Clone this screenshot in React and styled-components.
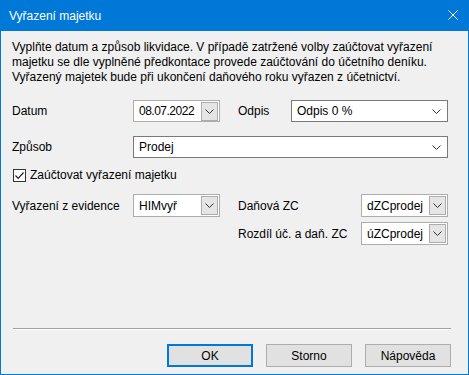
import React from 'react';
import styled, { createGlobalStyle } from 'styled-components';

const GlobalStyle = createGlobalStyle`
  html, body {
    margin: 0;
    padding: 0;
    background: #ffffff;
  }
  body {
    font-family: "Liberation Sans", Arial, sans-serif;
    font-size: 12px;
    color: #000;
  }
`;

const Window = styled.div`
  width: 469px;
  height: 375px;
  box-sizing: border-box;
  border: 1px solid #0078d7;
  border-top: none;
  display: flex;
  flex-direction: column;
  background: #f0f0f0;
`;

const TitleBar = styled.div`
  height: 31px;
  margin: 0 -1px;
  background: #0078d7;
  color: #fff;
  display: flex;
  align-items: center;
  justify-content: space-between;
  padding: 0 11px 0 9px;
  font-size: 12px;
`;

const CloseButton = styled.div`
  width: 10px;
  height: 10px;
  display: flex;
  margin-top: -1px;
`;

const Body = styled.div`
  flex: 1;
  display: flex;
  flex-direction: column;
  padding: 9px 17px 7px 11px;
`;

const Intro = styled.p`
  margin: 0;
  line-height: 15px;
`;

const Row = styled.div`
  display: flex;
  align-items: center;
  margin-top: ${p => p.$top || 0}px;
`;

const Label = styled.div`
  width: ${p => p.$w}px;
  flex: none;
  margin-left: ${p => p.$left || 0}px;
`;

const Field = styled.div`
  width: ${p => p.$w}px;
  height: ${p => p.$h || 22}px;
  flex: none;
  box-sizing: border-box;
  background: #fff;
  border: 1px solid ${p => (p.$soft ? '#adadad' : '#7a7a7a')};
  display: flex;
  align-items: center;
  padding: 0 1px 0 5px;
`;

const FieldText = styled.span`
  flex: 1;
  letter-spacing: ${p => p.$tight ? '-0.5px' : 'normal'};
`;

const DropButton = styled.div`
  width: 17px;
  height: ${p => p.$h || 19}px;
  box-sizing: border-box;
  border: 1px solid #adadad;
  background: #e5e5e5;
  display: flex;
  align-items: center;
  justify-content: center;
`;

const FlatArrow = styled.div`
  width: 17px;
  display: flex;
  align-items: center;
  justify-content: center;
  margin-right: 1px;
`;

const CheckRow = styled.label`
  display: flex;
  align-items: center;
  gap: 4px;
  margin-top: 10px;
`;

const CheckBox = styled.span`
  width: 13px;
  height: 13px;
  box-sizing: border-box;
  border: 1px solid #333;
  background: #fff;
  display: flex;
  align-items: center;
  justify-content: center;
  margin-left: 1px;
`;

const Columns = styled.div`
  display: flex;
  align-items: flex-start;
  margin-top: 12px;
`;

const Column = styled.div`
  display: flex;
  flex-direction: column;
  gap: 5px;
  margin-left: ${p => p.$left || 0}px;
`;

const Spacer = styled.div`
  flex: 1;
`;

const Separator = styled.div`
  margin-left: 1px;
  border-top: 1px solid #a0a0a0;
  border-bottom: 1px solid #ffffff;
  width: 438px;
`;

const Buttons = styled.div`
  display: flex;
  justify-content: flex-end;
  gap: 13px;
  margin-top: 14px;
`;

const Button = styled.div`
  width: 86px;
  height: 23px;
  box-sizing: border-box;
  background: #e1e1e1;
  border: ${p => (p.$primary ? '2px solid #0078d7' : '1px solid #adadad')};
  display: flex;
  align-items: center;
  justify-content: center;
`;

const Chevron = () => (
  <svg width="9" height="5" viewBox="0 0 9 5">
    <path d="M0.5 0.5 L4.5 4.5 L8.5 0.5" fill="none" stroke="#333" strokeWidth="1" />
  </svg>
);

const Combo = ({ w, text, soft, h, tight }) => (
  <Field $w={w} $soft={soft} $h={h}>
    <FieldText $tight={tight}>{text}</FieldText>
    {soft ? (
      <DropButton $h={h ? h - 4 : 19}>
        <Chevron />
      </DropButton>
    ) : (
      <FlatArrow>
        <Chevron />
      </FlatArrow>
    )}
  </Field>
);

export default function App() {
  return (
    <>
      <GlobalStyle />
      <Window>
        <TitleBar>
          <span>Vyřazení majetku</span>
          <CloseButton>
            <svg width="10" height="10" viewBox="0 0 10 10">
              <path d="M0.5 0.5 L9.5 9.5 M9.5 0.5 L0.5 9.5" stroke="#fff" strokeWidth="1" />
            </svg>
          </CloseButton>
        </TitleBar>
        <Body>
          <Intro>
            Vyplňte datum a způsob likvidace. V případě zatržené volby zaúčtovat vyřazení
            <br />
            majetku se dle vyplněné předkontace provede zaúčtování do účetního deníku.
            <br />
            Vyřazený majetek bude při ukončení daňového roku vyřazen z účetnictví.
          </Intro>

          <Row $top={15}>
            <Label $w={121}>Datum</Label>
            <Combo w={87} text="08.07.2022" soft tight />
            <Label $w={53} $left={18}>Odpis</Label>
            <Combo w={157} text="Odpis 0 %" />
          </Row>

          <Row $top={14}>
            <Label $w={121}>Způsob</Label>
            <Combo w={315} text="Prodej" />
          </Row>

          <CheckRow>
            <CheckBox>
              <svg width="11" height="11" viewBox="0 0 11 11">
                <path d="M1.5 5.5 L4.2 8.3 L9.5 2.5" fill="none" stroke="#222" strokeWidth="1.2" />
              </svg>
            </CheckBox>
            Zaúčtovat vyřazení majetku
          </CheckRow>

          <Columns>
            <Row>
              <Label $w={121}>Vyřazení z evidence</Label>
              <Combo w={87} h={23} text="HIMvyř" soft />
            </Row>
            <Column $left={18}>
              <Row>
                <Label $w={123}>Daňová ZC</Label>
                <Combo w={87} h={23} text="dZCprodej" soft />
              </Row>
              <Row>
                <Label $w={123}>Rozdíl úč. a daň. ZC</Label>
                <Combo w={87} h={23} text="úZCprodej" soft />
              </Row>
            </Column>
          </Columns>

          <Spacer />
          <Separator />
          <Buttons>
            <Button $primary>OK</Button>
            <Button>Storno</Button>
            <Button>Nápověda</Button>
          </Buttons>
        </Body>
      </Window>
    </>
  );
}
